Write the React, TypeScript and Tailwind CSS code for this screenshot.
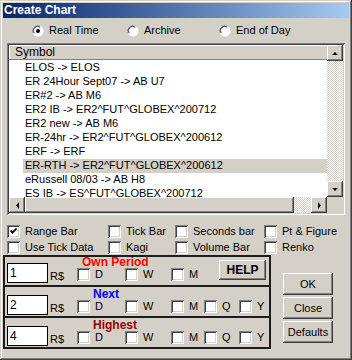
import React from 'react';

const raised =
  'shadow-[inset_-1px_-1px_#404040,inset_1px_1px_#ffffff,inset_-2px_-2px_#808080,inset_2px_2px_#d4d0c8]';
const sunken =
  'shadow-[inset_1px_1px_#808080,inset_-1px_-1px_#ffffff,inset_2px_2px_#404040,inset_-2px_-2px_#d4d0c8]';
const checker =
  'bg-[repeating-conic-gradient(#ffffff_0_25%,#d4d0c8_0_50%)] bg-[length:2px_2px]';

const symbols = [
  'ELOS -> ELOS',
  'ER 24Hour Sept07 -> AB U7',
  'ER#2 -> AB M6',
  'ER2 IB -> ER2^FUT^GLOBEX^200712',
  'ER2 new -> AB M6',
  'ER-24hr -> ER2^FUT^GLOBEX^200612',
  'ERF -> ERF',
  'ER-RTH -> ER2^FUT^GLOBEX^200612',
  'eRussell 08/03 -> AB H8',
  'ES IB -> ES^FUT^GLOBEX^200712',
];

function Arrow({ dir }: { dir: 'up' | 'down' | 'left' | 'right' }) {
  const pts = {
    up: '4,6 7,3 10,6',
    down: '4,3 7,6 10,3',
    left: '6,1 3,4.5 6,8',
    right: '3,1 6,4.5 3,8',
  }[dir];
  const vertical = dir === 'up' || dir === 'down';
  return (
    <div className={`w-[16px] h-[16px] bg-[#d4d0c8] flex items-center justify-center shrink-0 ${raised}`}>
      <svg width={vertical ? 14 : 9} height={9}>
        <polygon points={pts} fill="#000" />
      </svg>
    </div>
  );
}

function Box({ checked = false }: { checked?: boolean }) {
  return (
    <span className={`w-[13px] h-[13px] bg-white flex items-center justify-center shrink-0 ${sunken}`}>
      {checked && (
        <svg width="13" height="13">
          <path d="M3.5 5.5l2 2.2 4-4.2" stroke="#000" strokeWidth="1.8" fill="none" />
        </svg>
      )}
    </span>
  );
}

function Check({ label, checked }: { label: string; checked?: boolean }) {
  return (
    <div className="flex items-center h-[15px]">
      <Box checked={checked} />
      <span className="ml-[5px]">{label}</span>
    </div>
  );
}

function Radio({ label, selected }: { label: string; selected?: boolean }) {
  return (
    <div className="flex items-center">
      <svg width="12" height="12">
        <circle cx="6" cy="6" r="5.5" fill="#ffffff" />
        <path d="M1.2 8 A5.2 5.2 0 0 1 8 1.2" stroke="#808080" strokeWidth="1" fill="none" />
        <path d="M2.3 8.2 A4.2 4.2 0 0 1 8.2 2.3" stroke="#404040" strokeWidth="1" fill="none" />
        {selected && <circle cx="6" cy="6" r="2" fill="#000" />}
      </svg>
      <span className="ml-[5px]">{label}</span>
    </div>
  );
}

function PeriodGroup({
  title,
  color,
  value,
  titleOffset,
  boxes,
  help,
  first,
}: {
  title: string;
  color: string;
  value: string;
  titleOffset: string;
  boxes: { label: string; w: string }[];
  help?: boolean;
  first?: boolean;
}) {
  return (
    <div
      className={`flex border-x-2 border-b-2 border-[#1c1c1c] ${
        first ? 'border-t-2 h-[32px]' : 'pt-[2px] h-[31px]'
      }`}
    >
      <div className="flex items-end self-start mt-[6px] ml-[2px]">
        <div className="w-[41px] h-[20px] bg-white border border-black pl-[2px] text-[12px] leading-[18px]">
          {value}
        </div>
        <span className="w-[14px] ml-[2px] mb-[1px] leading-[12px]">R$</span>
      </div>
      <div className="flex flex-col">
        <div className={`h-[11px] leading-[11px] text-[12px] font-bold ${titleOffset} ${color}`}>{title}</div>
        <div className="flex items-center h-[13px] pl-[13px]">
          {boxes.map((b) => (
            <div key={b.label} className={`flex items-center ${b.w}`}>
              <Box />
              <span className="ml-[5px]">{b.label}</span>
            </div>
          ))}
        </div>
      </div>
      {help && (
        <div
          className={`ml-auto mr-[3px] mt-[3px] w-[47px] h-[20px] flex items-center justify-center font-bold text-[12px] bg-[#d4d0c8] ${raised}`}
        >
          HELP
        </div>
      )}
    </div>
  );
}

export default function App() {
  return (
    <div
      className="w-[352px] h-[360px] bg-[#d4d0c8] p-[3px] text-[11px] text-black shadow-[inset_-1px_-1px_#404040,inset_1px_1px_#d4d0c8,inset_-2px_-2px_#808080,inset_2px_2px_#ffffff] overflow-hidden"
      style={{ fontFamily: '"Liberation Sans", Arial, sans-serif' }}
    >
      {/* title bar */}
      <div className="h-[15px] bg-gradient-to-r from-[#0a246a] to-[#a6caf0] flex items-center pl-[1px]">
        <span className="text-white font-bold text-[12px] leading-[15px]">Create Chart</span>
      </div>

      {/* radios */}
      <div className="h-[25px] flex items-center pl-[29px]">
        <div className="w-[95px]">
          <Radio label="Real Time" selected />
        </div>
        <div className="w-[92px]">
          <Radio label="Archive" />
        </div>
        <Radio label="End of Day" />
      </div>

      {/* symbol list */}
      <div className={`ml-[4px] w-[338px] h-[172px] bg-white p-[2px] ${sunken}`}>
        <div className="flex h-full">
          <div className="flex flex-col w-[318px]">
            <div className="flex-1 overflow-hidden">
              <div className="h-[15px] bg-[#d4d0c8] pl-[6px] leading-[14px] text-[12px] border-b border-[#808080] shadow-[inset_1px_1px_#ffffff]">
                Symbol
              </div>
              <div className="mt-[1px]">
                {symbols.map((s) => (
                  <div key={s} className="h-[14px] pl-[14px]">
                    <span
                      className={`block h-[14px] pl-[2px] leading-[13px] whitespace-nowrap ${
                        s.startsWith('ER-RTH') ? 'bg-[#d4d0c8]' : ''
                      }`}
                    >
                      {s}
                    </span>
                  </div>
                ))}
              </div>
            </div>
            <div className="h-[16px] flex">
              <Arrow dir="left" />
              <div className={`w-[269px] h-[16px] bg-[#d4d0c8] ${raised}`} />
              <div className={`flex-1 ${checker}`} />
              <Arrow dir="right" />
            </div>
          </div>
          <div className="flex flex-col w-[16px]">
            <Arrow dir="up" />
            <div className={`flex-1 ${checker}`} />
            <Arrow dir="down" />
            <div className="h-[16px] bg-[#d4d0c8]" />
          </div>
        </div>
      </div>

      {/* chart types */}
      <div className="h-[40px] pt-[9px] pl-[4px] grid grid-cols-[101px_67px_89px_1fr]">
        <Check label="Range Bar" checked />
        <Check label="Tick Bar" />
        <Check label="Seconds bar" />
        <Check label="Pt & Figure" />
        <Check label="Use Tick Data" />
        <Check label="Kagi" />
        <Check label="Volume Bar" />
        <Check label="Renko" />
      </div>

      {/* periods + buttons */}
      <div className="flex">
        <div className="w-[268px] flex flex-col">
          <PeriodGroup
            first
            help
            title="Own Period"
            color="text-[#ff0000]"
            value="1"
            titleOffset="ml-[18px]"
            boxes={[
              { label: 'D', w: 'w-[48px]' },
              { label: 'W', w: 'w-[46px]' },
              { label: 'M', w: 'w-[33px]' },
            ]}
          />
          <PeriodGroup
            title="Next"
            color="text-[#0000ff]"
            value="2"
            titleOffset="ml-[29px]"
            boxes={[
              { label: 'D', w: 'w-[48px]' },
              { label: 'W', w: 'w-[46px]' },
              { label: 'M', w: 'w-[33px]' },
              { label: 'Q', w: 'w-[35px]' },
              { label: 'Y', w: 'w-[20px]' },
            ]}
          />
          <PeriodGroup
            title="Highest"
            color="text-[#990000]"
            value="4"
            titleOffset="ml-[29px]"
            boxes={[
              { label: 'D', w: 'w-[48px]' },
              { label: 'W', w: 'w-[46px]' },
              { label: 'M', w: 'w-[33px]' },
              { label: 'Q', w: 'w-[35px]' },
              { label: 'Y', w: 'w-[20px]' },
            ]}
          />
        </div>
        <div className="ml-[12px] mt-[18px] w-[50px] flex flex-col gap-[2px]">
          {['OK', 'Close', 'Defaults'].map((b) => (
            <div
              key={b}
              className={`h-[22px] flex items-center justify-center bg-[#d4d0c8] text-[11px] ${raised}`}
            >
              {b}
            </div>
          ))}
        </div>
      </div>
    </div>
  );
}
